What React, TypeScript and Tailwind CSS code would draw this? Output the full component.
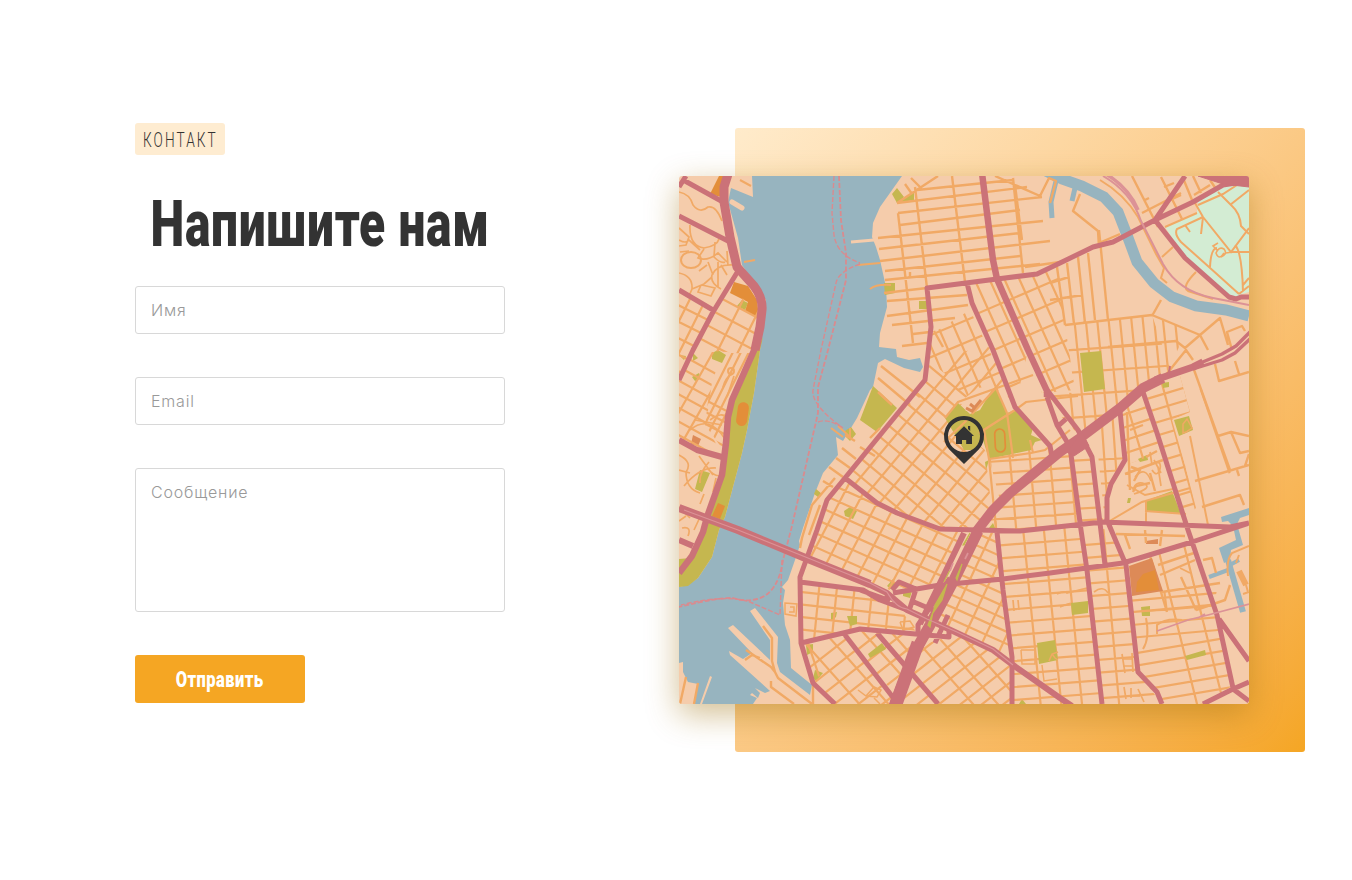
import React from "react";

type Family = [number, number, number, number, number, number, number];

// x, y: a point on the first street; dx, dy: its direction; sx, sy: step to the next; n: count
function streets(list: Family[]): string {
  return list
    .map(([x, y, dx, dy, sx, sy, n]) => {
      const k = 260 / Math.hypot(dx, dy);
      let d = "";
      for (let i = 0; i < n; i++) {
        const cx = x + sx * i;
        const cy = y + sy * i;
        d += `M${(cx - dx * k).toFixed(1)} ${(cy - dy * k).toFixed(1)}L${(cx + dx * k).toFixed(1)} ${(cy + dy * k).toFixed(1)}`;
      }
      return d;
    })
    .join("");
}

const districts: { area: string; families: Family[] }[] = [
  { area: "930,363 985,345 993,350 1015,407 1002,388 965,402 945,418 985,450 992,512 975,529 940,529 877,503 845,478 925,380", families: [
    [865, 472, 65, -78, 12, 9.8, 12],
    [928, 365, 100, 83, -9.2, 11, 14],
  ] },
  { area: "845,478 877,503 940,529 965,532 940,583 895,592 860,578 805,556 817,530 827,500", families: [
    [817, 545, 44, -84, 19, 0, 10],
    [868, 487, 100, 45, -3, 12.6, 8],
    [873, 476, 100, 45, 0, -14, 5],
  ] },
  { area: "979,532 997,533 1003,590 1011,655 993,650 935,620 953,580", families: [
    [965, 590, 40, -85, 21, 0, 5],
    [985, 537, 100, 45, -3, 10.8, 12],
  ] },
  { area: "803,645 845,635 865,663 893,700 893,704 835,704 813,683", families: [
    [822, 662, 40, 45, 22, -8, 3],
    [832, 650, 100, -78, 6, 14, 7],
  ] },
  { area: "860,629 918,637 915,655 897,695 870,668 845,635", families: [
    [870, 640, 40, 45, 22, -7, 4],
    [870, 640, 100, -78, 7, 14, 7],
  ] },
  { area: "922,645 957,634 993,650 1012,662 1013,704 900,704", families: [
    [925, 650, 40, 45, 23, -2, 6],
    [933, 642, 100, -78, 8, 10.5, 13],
  ] },
  { area: "800,582 863,590 900,608 918,635 860,629 801,643", families: [
    [817, 610, -6, 60, 17.5, 2, 6],
    [820, 594, 100, 11, -1, 12.4, 4],
  ] },
  { area: "987,450 1052,447 1070,450 1080,523 1020,530 985,528 1000,500", families: [
    [989, 450, 9, 100, 20, -1, 6],
    [1030, 459, 100, -7, 1, 11.5, 7],
  ] },
  { area: "997,533 1080,526 1102,704 1013,704 1012,657", families: [
    [1026, 558, 10, 100, 20.5, -2, 3],
    [1030, 543, 100, -8, 1, 12.9, 13],
  ] },
  { area: "1080,526 1111,530 1126,565 1138,673 1162,704 1102,704", families: [
    [1108, 580, 9, 100, 20, 0, 1],
    [1110, 543, 100, -8, 1, 12.8, 13],
  ] },
  { area: "1070,447 1090,457 1103,520 1080,523", families: [
    [1085, 460, 100, -6, 1, 12, 6],
  ] },
  { area: "1095,425 1120,410 1125,460 1110,485 1105,522", families: [
    [1103, 440, 7, 100, 11, -2, 2],
    [1110, 459, 100, -5, 0, 12, 6],
  ] },
  { area: "1120,412 1143,395 1163,452 1128,464 1125,460", families: [
    [1135, 411, 100, -33, 3, 12, 5],
    [1133, 425, 30, 100, 0, 0, 1],
  ] },
  { area: "1145,390 1180,376 1190,412 1172,420 1185,465 1196,508 1183,520", families: [
    [1160, 395, 100, -30, 4, 12, 10],
    [1165, 395, 27, 100, 20, -5, 2],
  ] },
  { area: "1196,542 1126,565 1138,673 1162,704 1204,704 1232,686 1217,615", families: [
    [1145, 611, 100, -9, 2, 12.6, 3],
    [1155, 650, 100, -17, 2, 12.2, 6],
    [1181, 640, 25, 100, 26, -3, 2],
  ] },
  { area: "1126,563 1150,556 1162,592 1217,590 1213,610 1133,612", families: [
    [1160, 598, 100, -9, 2, 12, 2],
    [1163, 580, 12, 100, 28, -4, 1],
  ] },
  { area: "967,283 1050,270 1057,267 1065,325 1075,390 1042,393 1028,350 1015,407 992,350", families: [
    [983, 298, 42, 93, 13.6, -3, 7],
    [1030, 291, 100, -43, 4, 20, 6],
  ] },
  { area: "930,335 970,310 1013,400 1001,390 967,400 948,376 930,362", families: [
    [936, 358, 40, 92, 14, -4, 6],
    [950, 327, 100, -42, 5, 20, 4],
  ] },
  { area: "1065,325 1152,315 1172,374 1142,387 1080,436 1050,405 1042,392 1075,393", families: [
    [1065, 340, 10, 100, 11.4, 0, 10],
    [1100, 348, 100, -7, 1, 22.5, 5],
  ] },
  { area: "1152,316 1180,327 1180,345 1165,376", families: [
    [1164, 330, 10, 100, 12, 0, 2],
  ] },
  { area: "679,293 713,312 693,350 679,380", families: [
    [690, 311, 100, 50, -1, 16, 5],
    [687, 305, -45, 90, 14, 4, 2],
  ] },
  { area: "713,312 727,288 760,310 758,335 752,355 727,352 693,350", families: [
    [730, 303, 100, 53, -4, 15, 5],
    [722, 342, -45, 90, 19, 4, 2],
  ] },
  { area: "690,352 723,352 712,382 706,425 722,455 697,450 679,440 679,380", families: [
    [700, 365, 100, 55, -3, 12, 8],
    [691, 391, -50, 88, 17, 6, 2],
  ] },
  { area: "724,353 753,353 732,400 727,455 705,425 710,385", families: [
    [714, 390, -45, 90, 6, 4, 4],
    [715, 405, 100, 52, -2, 11, 5],
  ] },
  { area: "802,645 813,640 823,673 813,681", families: [[812, 655, 30, 90, 0, 0, 1]] },
  { area: "1192,392 1249,372 1249,465 1190,490", families: [[1201, 390, 31, 90, 0, 0, 1]] },
];

const river =
  "M752 176L753 197L731 188L728 202L738 238L742 265L755 284L766 300L763 327L760 350L754 393L747 430L742 453L725 517L719 530L712 557L698 578L688 585L679 587V663L683 662L683 672L688 682L698 684L694 704H700L710 676L712 677L702 704H753L757 698L750 695L752 693L758 698L760 693L755 688L765 693L770 691L730 655L729 651L743 659L752 653L728 628L733 625L770 660V640L750 611L755 608L778 637L777 663L780 672L810 695L812 685L791 668L790 640L785 625L783 603L785 590L782 587L788 580L795 560L800 545L799 541L803 528L815 493L823 473L838 455L836 437L843 441L857 418L870 390L873 387L878 363L885 359L904 368L920 372L923 367L920 358L909 360L897 357L896 349L879 347L880 333L887 307L886 287L880 260L876 247L872 237L873 223L880 207L902 176Z";

const localRoads =
  "M952 176L965 282M915 187L927 288M898 213L913 343M1013 178L1023 273M1015 185L1022 240M917 190L1013 180M897 203L938 176M911 178L921 188M905 184L912 194M897 203L1027 187M898 213L1042 197M900 225L1020 210M878 238L1043 221M879 249L1020 233M880 261L1050 241M885 271L1020 256M885 280L1040 264M884 293L927 288M887 301L967 295M887 316L968 305M892 325L955 318M902 346L927 343M913 334L930 332M995 176L1040 196L1049 178L1056 181L1050 203" +
  "M1025 267L1060 262M934 331L943 347M910 272V278" +
  "M1080 194L1073 211L1098 231L1099 247M1099 243L1120 234M1132 176L1158 227M1099 230L1108 320M1088 253L1095 320M1078 257L1085 323M1067 263L1074 324M1057 267L1065 325M1065 325L1152 315L1200 335L1220 318L1228 345M1152 316L1161 300M1200 335L1185 348L1176 341L1108 347M1200 335L1208 350M1050 283L1069 277M1050 300L1083 295M1183 178L1192 200M1161 177L1182 219M1142 213L1181 193M1164 187L1174 183M1193 176L1201 193M1168 201L1181 195M1145 200L1149 198M1194 195L1210 185M1210 180L1216 189M1227 332L1232 350M1229 341L1227 332L1242 326L1245 331" +
  "M1165 376L1186 350L1193 360M1215 364L1219 381L1249 372M1235 361L1239 374M1143 425L1130 430M1193 367L1230 470M1195 481L1249 465M1202 507L1240 495L1244 505M1218 436L1231 432L1240 453L1249 451M1231 432L1249 436M1237 470L1239 476M1249 454L1245 466" +
  "M881 366L920 397M878 378L910 405M878 392L892 405M870 438L880 428M860 447L875 456" +
  "M812 542V548M800 548L802 538L812 505L835 478M820 505L809 535M823 481L833 487M829 467L843 477M836 458L850 468M842 448L856 459M845 435L855 441" +
  "M746 650L771 667L775 672L778 678L812 704M763 626L772 638V661L775 672M771 681V687L794 704M745 660L752 655L760 658M813 685V704M686 677L680 704M698 683L694 704" +
  "M1125 474L1163 460M1134 481L1140 470L1131 467M1150 473L1155 491M1146 457L1157 451M1133 492L1136 486L1150 483" +
  "M1127 412L1130 490M1203 560L1212 558L1216 573M1181 577L1196 610M1160 575L1195 560M1158 565L1197 552M1162 592L1220 583M1196 610L1225 600L1230 585M1150 556L1167 612M1125 535L1130 549M1145 530L1146 543M1162 530L1160 546M1116 534L1185 536";

const curls =
  "M679 192Q690 194 693 205Q700 214 708 207Q716 205 722 221M690 225Q689 246 704 248Q717 246 719 239M679 240Q686 244 689 240L700 250M704 249L698 258Q707 262 718 253L727 262M679 273Q693 276 692 289L688 298M679 228L689 237L686 245L679 246M715 242L714 257Q721 264 725 262M733 265Q717 264 712 275Q710 283 721 289M718 262V287M721 265L727 275M727 251L728 266M708 262L713 275M692 289L704 284L712 277M701 285L698 292L711 296L715 288L702 285M689 251L680 252M707 265L699 271" +
  "M723 387Q726 376 733 374M727 397Q731 385 734 376M710 420Q722 411 727 418M690 430Q709 414 725 439M695 420L722 425M679 455Q693 462 686 472Q686 489 700 493M679 470L690 473M699 456L713 475M684 486Q700 467 716 468M709 462Q699 473 700 483M679 507L690 518M708 469Q716 478 721 475M679 521L686 516M682 528Q692 526 688 536M701 515L694 530M716 478L713 492M704 494L700 504" +
  "M1135 477Q1145 465 1151 481M1133 490Q1136 480 1145 484Q1152 488 1134 494M1154 460L1161 473M1150 452L1152 465M1158 467L1161 486M1152 464Q1162 459 1160 469Q1157 478 1152 470" +
  "M1057 594Q1065 590 1067 593L1087 588M1060 607Q1069 603 1073 603M1094 592Q1103 585 1108 593M1122 654L1125 673M1132 653L1133 672M1123 659H1133M1123 666H1133M1131 688V698M1138 689L1144 702M1130 696H1140M1124 687L1126 699M1013 600L1014 611M1018 600L1019 610M1180 568L1190 573";

const arterials =
  "M685 181L723 202M679 187L686 176M679 216L730 242M679 290L713 310M738 271L713 312L693 350L679 380" +
  "M835 704L813 683L801 643L800 577L817 530L827 500L845 478L925 380L931 327L927 288L997 279L1037 274L1060 263L1093 247L1113 242L1155 220L1193 202L1223 185L1249 181M1155 220L1185 176M1155 220L1185 258L1229 297L1236 299L1241 297H1249" +
  "M967 283L972 303L993 350L1015 407L1050 446L1052 456" +
  "M845 478L877 503L897 513L940 529L1020 531L1103 522L1230 527L1249 523M893 593L940 585L1003 579L1050 573L1123 563L1192 542L1249 523" +
  "M1143 392L1157 433L1188 530L1217 615L1233 688M1219 619L1249 661M1203 704L1233 689L1249 682M1233 689L1249 701" +
  "M1120 411L1125 460L1111 484L1107 498V520L1126 565L1138 672L1157 692L1162 704" +
  "M997 532L1003 590L1012 657V704M1047 390L1078 430L1092 457L1100 523L1105 565M1047 397L1057 425L1070 447L1081 530L1087 570L1102 704M1057 427L1066 419" +
  "M801 643L860 629L949 637V630M845 635L895 700M877 633L938 704M800 582L863 590L880 600L907 610M860 590L888 600L887 594M892 590L899 582L916 589L909 611M914 602L940 613M918 637L918 625L950 578M935 643L948 615";

const glyphFont = "font-['Roboto','Liberation_Sans',sans-serif]";

function CityMap() {
  return (
    <svg viewBox="679 176 570 528" className="block h-full w-full" fill="none" aria-hidden="true">
      <rect x="679" y="176" width="570" height="528" fill="#f5ccab" />
      <path d={river} fill="#97b4bf" />
      <g stroke="#f5ccab" strokeWidth="3">
        <path d="M732 202L742 208" strokeWidth="5" strokeLinecap="round" />
        <path d="M851 242L874 240" />
      </g>
      <g stroke="#97b4bf">
        <path d="M1046 171L1062 179L1082 186L1104 197L1118 212L1127 235L1137 262L1154 283L1172 297L1196 306L1226 310L1249 316" strokeWidth="11" />
        <path d="M1056 181L1051 202L1052 218" strokeWidth="5" />
        <path d="M1075 188L1072 201" strokeWidth="5" />
        <path d="M1228 560L1243 612" strokeWidth="6" />
        <path d="M1228 570L1209 577M1228 566L1239 560" strokeWidth="4" />
      </g>
      <path d="M1221 517L1249 508V515L1240 518L1237 524L1243 545L1231 550L1230 560L1224 563L1219 548L1236 540L1233 526L1228 521L1222 522Z" fill="#97b4bf" />
      <path d="M1165 227L1197 213L1198 202L1230 183L1249 187V292L1242 294L1233 300L1185 257Z" fill="#d3ecd3" />

      <g fill="#c5b74f">
        <path d="M763 337L760 350L754 393L747 430L742 453L725 517L719 530L712 557L698 578L688 586L679 587V573L692 558L707 520L722 478L728 440L729 412L735 397Z" />
        <path d="M679 559L691 558L688 570L679 575ZM742 300L748 303L745 310L737 306ZM712 353L718 350L726 355L722 363L712 359ZM692 377L699 373L700 379L695 381ZM679 355L686 356L684 360ZM693 353L698 358L693 361ZM700 470L710 473L702 492L695 489Z" />
        <path d="M873 386L897 408L877 432L860 420ZM892 194L897 188L904 197L897 203ZM901 200L914 192V200L902 202ZM884 283H895V293L885 295ZM919 301H927V309H919Z" />
        <path d="M845 431L851 427L856 434L850 441L846 437ZM844 511L850 507L857 511L853 519L845 516ZM816 489L822 494L818 497L814 494ZM893 579L896 587L891 589L887 586ZM903 592L912 591L910 598L903 596ZM831 613L837 612L836 617L831 621ZM806 645L813 644V652L807 655ZM815 670L823 673L816 681L813 678Z" />
        <path d="M1138 459L1147 455L1148 460L1140 462ZM1128 498H1131L1130 503H1127ZM1141 607L1150 606V616L1142 616ZM1019 704L1022 699L1026 704ZM985 462L989 460L986 470ZM989 528L993 523L996 530Z" />
      </g>
      <g fill="#e38e39">
        <path d="M719 176H726L721 197L710 194ZM734 282L748 286L757 300L759 318L745 311L748 302L730 293Z" />
        <rect x="737" y="402" width="11" height="24" rx="5.5" transform="rotate(8 742 414)" />
        <path d="M718 503L725 506L720 519L712 516Z" />
      </g>
      <path d="M1146 541L1158 539V544H1146ZM693 435L701 439L698 446L691 444Z" fill="#dd8a57" />

      <defs>
        {districts.map((d, i) => (
          <clipPath id={`district-${i}`} key={i}>
            <polygon points={d.area} />
          </clipPath>
        ))}
      </defs>
      <g stroke="#f1a965" strokeWidth="2.2">
        {districts.map((d, i) => (
          <path key={i} d={streets(d.families)} clipPath={`url(#district-${i})`} />
        ))}
        <path d={localRoads} strokeWidth="2.4" strokeLinejoin="round" />
        <path d={curls} strokeWidth="1.7" />
      </g>
      <g fill="#c5b74f">
        <path d="M945 418L958 403L970 414L980 410L990 393L996 387L1007 413L1019 409L1033 428L1031 435L1042 440L1035 442L1031 450L989 459L983 440L974 450L964 450Z" />
        <path d="M1080 353L1101 351L1105 389L1084 392ZM1162 383L1169 382V387L1163 388ZM1174 420L1189 416L1193 430L1179 436ZM1145 501L1172 491L1181 514L1146 511ZM1071 603L1088 601V613L1072 615ZM1037 643L1055 640L1058 660L1039 664ZM1185 656L1205 650L1206 655L1187 660ZM847 616H857V624L850 626ZM868 654L882 643L886 649L870 658Z" />
      </g>
      <path d="M1129 566L1152 558L1163 591L1132 596Z" fill="#dd8a57" />
      <path d="M1137 582L1143 574L1155 570L1159 590L1136 592Z" fill="#e38e39" />
      <path d="M978 388L992 386L976 408L966 411L960 402Z" fill="#f5ccab" />
      <g stroke="#f1a965">
        <path d="M740 180L751 186M744 262L755 260M870 289Q876 284 891 285M858 265L880 263M831 428L843 437M838 426L850 437V428" strokeWidth="2" />
        <path d="M945 418L958 402L997 388L1033 375M967 420L944 442M996 388L972 414M996 388L1007 413M979 433L1015 410L1026 402L1078 396M1007 413L1013 458M984 430L989 459L1031 453L1045 450L1070 430M989 459L996 528M1030 440L1033 453" strokeWidth="2.2" />
        <path d="M1127 485L1145 495L1173 489M1145 511L1186 514M1108 522L1142 502L1190 488M1146 500V522M1190 436L1208 525" strokeWidth="2" />
        <path d="M1058 652L1052 654L1049 661M1052 654L1055 658L1058 660M1021 650H1035V664H1022L1021 650M1042 665L1044 681L1057 679M866 696L874 687L881 690L877 697L866 696L858 690M874 698L880 704M900 622L903 630L914 627L910 621L900 622M785 603L797 604L796 616L785 614ZM790 607H794V612H789" strokeWidth="1.5" />
      </g>
      <g stroke="#f1a965" strokeWidth="2">
        <ellipse cx="691" cy="260" rx="10" ry="8" />
        <circle cx="731" cy="371" r="3" />
        <path d="M1197 213L1165 227M1195 203L1203 217L1231 252L1249 228M1203 217L1177 229Q1174 234 1181 242L1209 267L1239 294M1218 192L1232 206Q1240 213 1241 226L1249 234M1203 217L1201 234M1198 205L1223 194L1240 183M1230 205L1249 190M1210 267Q1211 248 1217 248M1231 252H1249M1235 245Q1242 252 1243 292M1243 285L1249 278M1185 225L1190 232M1239 294L1249 286" />
        <path d="M1224 253Q1219 261 1216 253Q1219 246 1224 249Q1228 254 1221 257M1217 250L1213 246L1218 243M1226 253L1232 252" strokeWidth="1.6" />
        <path d="M1100 180Q1124 194 1138 217L1156 254L1164 268L1161 278L1167 283M1162 257L1173 247M1196 272Q1181 287 1188 291L1213 299" />
        <path d="M1228 576Q1226 560 1232 553L1249 546M1239 555L1236 563" />
        <path d="M1239 571L1246 585" strokeWidth="6" />
        <path d="M1246 585L1248 592M1243 594L1249 592" />
        <path d="M1183 433L1183 424L1187 419L1192 428L1186 432Z" strokeWidth="1.5" />
        <path d="M1157 634V625Q1165 618 1182 620M1146 618Q1150 638 1143 649" />
      </g>
      <rect x="995" y="429" width="10" height="23" rx="5" stroke="#e38e39" strokeWidth="1.7" transform="rotate(-3 1000 440)" />
      <path d="M966 408L972 411L981 400M975 408L970 404" stroke="#dd8a57" strokeWidth="3" />

      <g stroke="#d98b8f" strokeWidth="1.4" strokeDasharray="5 2">
        <path d="M834 176L832 213L834 235Q837 255 860 263" />
        <path d="M839 176L841 220L846 253V280L828 350L818 387V413L791 530L783 560Q778 594 757 599Q745 602 733 598Q719 597 679 607" strokeWidth="1.8" />
        <path d="M860 264Q838 272 836 283L821 350L813 390Q811 405 843 428M818 422Q828 418 843 428M782 560L780 615L750 602Q725 594 681 605" />
      </g>

      <g stroke="#cb7278" strokeLinejoin="round">
        <path d={arterials} strokeWidth="5" />
        <path d="M729 171L724 187V202L730 237L737 267L754 286Q763 298 762 310L760 327L755 350" strokeWidth="9" />
        <path d="M756 346L732 400L728 417L726 443L722 475L707 517L703 532L692 556L679 573" strokeWidth="6.5" />
        <path d="M679 440L697 450L722 457M679 540L693 546" strokeWidth="6" />
        <path d="M679 508L738 530L803 557L870 584" strokeWidth="8" />
        <path d="M866 583L887 593L907 610L927 619L957 633L993 650L1013 665L1060 698L1072 706" strokeWidth="6" />
        <path d="M982 173L987 213L993 260L997 279L1028 350L1047 391V397" strokeWidth="6.5" />
        <path d="M976 532L993 510L1010 493L1060 452L1080 438L1120 408L1143 388L1163 378" strokeWidth="10" />
        <path d="M1155 380L1193 367L1203 362" strokeWidth="7" />
        <path d="M1193 366L1222 354L1236 346L1251 331M1193 369L1222 360L1235 353L1251 338" strokeWidth="3.4" />
        <path d="M1168 377L1170 366" strokeWidth="2" />
        <path d="M964 533L940 583L920 624" strokeWidth="6" />
        <path d="M978 531L954 580L930 625L916 650L894 706" strokeWidth="11" />
        <path d="M918 643L896 704" strokeWidth="13" />
        <path d="M1067 452L1082 432L1089 446L1074 456Z" fill="#cb7278" strokeWidth="1" />
        <path d="M1198 176H1249V187L1223 184Z" fill="#cb7278" strokeWidth="1" />
      </g>
      <path d="M963 545L970 533L964 545ZM944 582L951 568ZM935 605L947 584L942 600L933 613ZM928 625L933 612L930 627ZM956 578L962 564L957 580Z" fill="#c5b74f" stroke="#c5b74f" strokeWidth="1.2" />
      <g stroke="#dc9296" strokeWidth="1.2">
        <path d="M684 510L738 530L803 556L870 583L887 592Q896 608 907 609L927 619L957 632L993 649L1013 665" />
        <path d="M1103 176Q1131 192 1141 221L1163 264Q1178 291 1213 298L1249 305" strokeWidth="2" />
        <path d="M1106 174Q1129 188 1138 210" strokeWidth="3.5" />
        <path d="M1157 631L1188 620L1208 615L1249 604M1198 618L1205 614M950 571L953 563M965 559L968 553" strokeWidth="1.7" />
      </g>
      <g fill="#333">
        <path fillRule="evenodd" d="M964 416A20 20 0 0 1 978.5 449.8L964 464L949.5 449.8A20 20 0 0 1 964 416ZM964 420A16 16 0 1 0 964 452A16 16 0 1 0 964 420Z" />
        <path d="M964 426.2L974 436H972V444H966.2V440H962V444H956V436H954ZM968 426H970.2V431L968 429Z" />
      </g>
    </svg>
  );
}

export default function App() {
  const field =
    "block w-full rounded-[3px] border border-[#d8d8d8] bg-white px-[15px] font-['Inter','Liberation_Sans',sans-serif] text-[16px] font-light tracking-[0.8px] text-[#333] outline-none placeholder:text-[#999]";
  return (
    <main className="flex h-[880px] w-[1352px] items-start overflow-hidden bg-white pl-[135px]">
      <section className="mt-[123px] w-[370px] shrink-0">
        <div className="h-8 w-[90px] rounded-[3px] bg-[#feecd1] pl-2">
          <span className={`${glyphFont} inline-block origin-left scale-x-[0.65] whitespace-nowrap text-[21px] leading-[34px] font-light tracking-[3.2px] text-[#333]`}>
            КОНТАКТ
          </span>
        </div>
        <h1 className="flex h-[131px] justify-center pt-[33px]">
          <span className={`${glyphFont} inline-block scale-x-[0.75] whitespace-nowrap text-[64px] leading-[74px] font-black tracking-[0.9px] text-[#333]`}>
            Напишите нам
          </span>
        </h1>
        <form className="flex flex-col gap-[43px]" onSubmit={(e) => e.preventDefault()}>
          <input className={`${field} h-12`} placeholder="Имя" />
          <input className={`${field} h-12`} placeholder="Email" />
          <textarea className={`${field} h-36 resize-none py-[11px] leading-6`} placeholder="Сообщение" />
          <button className="flex h-12 w-[170px] items-center justify-center rounded-[3px] bg-[#f5a623] pt-0.5">
            <span className={`${glyphFont} inline-block scale-x-[0.75] whitespace-nowrap text-[22px] leading-none font-black tracking-[0.6px] text-white`}>
              Отправить
            </span>
          </button>
        </form>
      </section>
      <section className="mt-32 ml-[230px] flex h-[624px] w-[570px] shrink-0 items-center rounded-[3px] bg-linear-to-br from-[#ffebcb] to-[#f5a623]">
        <div className="-ml-14 h-[528px] w-[570px] shrink-0 rounded-[3px] shadow-[0_10px_32px_rgba(158,110,10,0.45)]">
          <div className="h-full w-full overflow-hidden rounded-[3px]">
            <CityMap />
          </div>
        </div>
      </section>
    </main>
  );
}
